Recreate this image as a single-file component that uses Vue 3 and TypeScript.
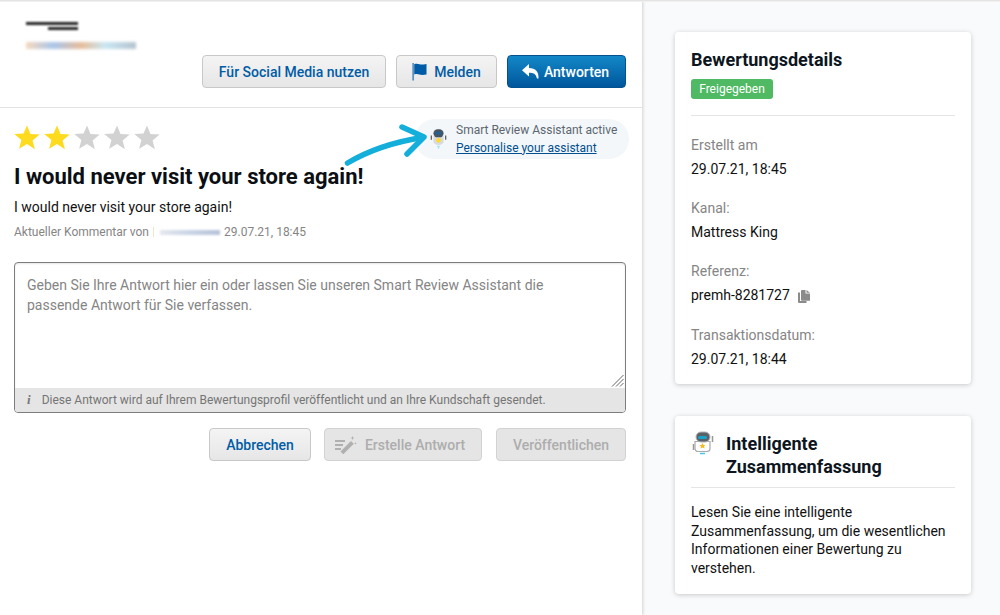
<script setup lang="ts">
const stars = [true, true, false, false, false]
const details = [
  { label: 'Erstellt am', value: '29.07.21, 18:45', copy: false },
  { label: 'Kanal:', value: 'Mattress King', copy: false },
  { label: 'Referenz:', value: 'premh-8281727', copy: true },
  { label: 'Transaktionsdatum:', value: '29.07.21, 18:44', copy: false },
]
</script>

<template>
  <div class="page">
    <main class="left">
      <header class="head">
        <div class="blurs">
          <div class="blur-name"><i class="n1"></i><i class="n2"></i></div>
          <div class="blur-mail"></div>
        </div>
        <div class="actions">
          <button class="btn">Für Social Media nutzen</button>
          <button class="btn">
            <svg class="flag" width="16" height="18" viewBox="0 0 16 18"><path d="M.5 0h1.200V17.500H.5z" fill="#1f6bb0"/><path d="M2.200 1.200c2-.8 3.500-.5 5.200 0s3.400.5 7.100-.2v10.500c-3.500.7-5.400.6-7.100 0s-3.200-.7-5.200 0z" fill="#005ca6"/></svg>
            Melden
          </button>
          <button class="btn primary reply-btn">
            <svg width="17" height="15" viewBox="0 0 17 15"><path d="M7 0 0 6.200l7 6.200V8.700c4.300 0 6.800 1 8 5.800h1.500C17 7.500 13.500 4 7 3.900z" fill="#fff"/></svg>
            Antworten
          </button>
        </div>
      </header>

      <section class="body">
        <div class="top-row">
          <div class="stars">
            <svg v-for="(on, i) in stars" :key="i" width="30" height="26" viewBox="0 0 30 26">
              <path d="M15 1.500l3.500 8.500 9.200.6-7.100 5.800 2.300 8.900L15 20l-7.900 4.800 2.300-8.900-7.100-5.800 9.200-.6z" :fill="on ? '#ffdb1f' : '#d2d2d2'"/>
            </svg>
          </div>
          <div class="assistant">
            <svg class="bot" width="17" height="22" viewBox="0 0 20 26">
              <path d="M1.500 9v5M18.500 9v5" stroke="#555" stroke-width="1.400"/>
              <path d="M4 9h12v7c0 2.500-2.500 4-6 4s-6-1.500-6-4z" fill="#d7dbe0"/>
              <rect x="4" y="1.500" width="12" height="9.500" rx="5" fill="#4a5560"/>
              <rect x="6" y="4.500" width="8" height="3.500" rx="1.700" fill="#25608f"/>
              <circle cx="10" cy="14.500" r="2.800" fill="#ffd92e"/>
              <path d="M8 21h4l-2 4z" fill="#a8e2f2"/>
            </svg>
            <div class="assistant-text">
              <span>Smart Review Assistant active</span>
              <a href="#">Personalise your assistant</a>
            </div>
          </div>
        </div>

        <h1>I would never visit your store again!</h1>
        <p class="comment">I would never visit your store again!</p>
        <p class="meta">
          Aktueller Kommentar von
          <i class="meta-tick"></i>
          <i class="meta-blur"></i>
          29.07.21, 18:45
        </p>

        <div class="reply">
          <div class="input">
            <span>Geben Sie Ihre Antwort hier ein oder lassen Sie unseren Smart Review Assistant die passende Antwort für Sie verfassen.</span>
            <svg class="grip" width="13" height="13" viewBox="0 0 13 13"><path d="M12.500 1 1 12.500M12.500 5 5 12.500M12.500 9 9 12.500" stroke="#666" stroke-width="1"/></svg>
          </div>
          <div class="note">
            <em>i</em>
            <span>Diese Antwort wird auf Ihrem Bewertungsprofil veröffentlicht und an Ihre Kundschaft gesendet.</span>
          </div>
        </div>

        <div class="foot-actions">
          <button class="btn cancel">Abbrechen</button>
          <button class="btn off gen">
            <svg width="22" height="18" viewBox="0 0 22 18"><path d="M0 5h10M0 9h8M0 13h6" stroke="#b0b0b0" stroke-width="2"/><path d="M5.500 15.500 16 5l2.800 2.800L8.300 18.300z" fill="#b0b0b0"/><path d="M17.500 0l.6 1.400 1.400.6-1.400.6-.6 1.400-.6-1.400-1.400-.6 1.400-.6zM20.500 6l.4 1 .9.400-.9.400-.4 1-.4-1-.9-.4.9-.4z" fill="#b0b0b0"/></svg>
            Erstelle Antwort
          </button>
          <button class="btn off pub">Veröffentlichen</button>
        </div>
      </section>

      <svg class="arrow" width="90" height="46" viewBox="0 0 90 46">
        <path d="M3.500 40C22 29 44 20 78 14.500" fill="none" stroke="#14aedb" stroke-width="5.500" stroke-linecap="round"/>
        <path d="M58 4 80 14 63 31" fill="none" stroke="#14aedb" stroke-width="5.500" stroke-linecap="round" stroke-linejoin="round"/>
      </svg>
    </main>

    <aside class="right">
      <section class="card first">
        <h2>Bewertungsdetails</h2>
        <span class="badge">Freigegeben</span>
        <hr />
        <div class="details">
          <div v-for="d in details" :key="d.label" class="detail">
            <div class="label">{{ d.label }}</div>
            <div class="value">
              {{ d.value }}
              <svg v-if="d.copy" class="copy" width="12" height="13" viewBox="0 0 12 13"><path d="M0 2.500h2v8.500h6.500v2H1a1 1 0 0 1-1-1z" fill="#8b8b8b"/><path d="M3 1a1 1 0 0 1 1-1h3.500v3.500H12V10a.8.8 0 0 1-1 .8H4a1 1 0 0 1-1-1z" fill="#8b8b8b"/><path d="M8.500 0 12 2.700H8.500z" fill="#8b8b8b"/></svg>
            </div>
          </div>
        </div>
      </section>

      <section class="card second">
        <div class="card-head">
          <svg class="bot2" width="24" height="24" viewBox="0 0 24 24">
            <path d="M2.500 13v6M21.500 5v6" stroke="#999" stroke-width="1.500"/>
            <path d="M4 10.500h15v7c0 2-1.500 3-3 3H7c-1.500 0-3-1-3-3z" fill="#fff" stroke="#aaa" stroke-width="1.200"/>
            <rect x="5" y="1" width="14" height="10" rx="5" fill="#5b6168" stroke="#b5b5b5"/>
            <rect x="7" y="5" width="9" height="3" rx="1.500" fill="#19a3c9"/>
            <path d="M11.500 12l1 2 2 .2-1.500 1.400.5 2-2-1.100-2 1.100.5-2L8.500 14.200l2-.2z" fill="#f5b921"/>
            <path d="M9 22.500h5" stroke="#45c9ee" stroke-width="1.500"/>
          </svg>
          <h2>Intelligente Zusammenfassung</h2>
        </div>
        <hr class="tight" />
        <p>Lesen Sie eine intelligente Zusammenfassung, um die wesentlichen Informationen einer Bewertung zu verstehen.</p>
      </section>
    </aside>
  </div>
</template>

<style>
html, body { margin: 0; background: #fff; }
</style>

<style scoped>
.page {
  width: 1000px;
  height: 615px;
  display: flex;
  overflow: hidden;
  font-family: Roboto, "Liberation Sans", sans-serif;
  background: #f8fafb;
  box-sizing: border-box;
  position: relative;
}
.page::before {
  content: "";
  position: absolute;
  left: 0; right: 0; top: 0;
  height: 2px;
  background: linear-gradient(#dedede, #f6f6f6);
  z-index: 3;
}
.left {
  width: 642px;
  flex: none;
  background: #fff;
  box-shadow: 1px 0 3px rgba(0, 0, 0, .16);
  position: relative;
  box-sizing: border-box;
}
.head {
  height: 108px;
  box-sizing: border-box;
  border-bottom: 1px solid #e2e2e2;
  position: relative;
  padding: 55px 16px 0 0;
}
.blurs {
  position: absolute;
  left: 26px;
  top: 20px;
}
.blur-name { height: 10px; position: relative; width: 54px; }
.blur-name i { position: absolute; display: block; height: 3px; background: #222; filter: blur(1px); }
.n1 { left: 0; top: 2px; width: 52px; }
.n2 { left: 22px; top: 7px; width: 30px; }
.blur-mail {
  margin-top: 12px;
  width: 110px;
  height: 7px;
  background: linear-gradient(90deg, #f6d9bd, #a9c6ea 25%, #e6bd9a 50%, #c9e7f2 72%, #b5c3cf);
  filter: blur(1.500px);
}
.actions {
  display: flex;
  justify-content: flex-end;
  gap: 10px;
}
.btn {
  height: 33px;
  box-sizing: border-box;
  border: 1px solid #c8c8c8;
  border-radius: 4px;
  background: linear-gradient(#f4f4f4, #e6e6e6);
  color: #005ca6;
  font: 500 14px Roboto, "Liberation Sans", sans-serif;
  display: inline-flex;
  align-items: center;
  justify-content: center;
  gap: 6px;
  padding: 0;
  white-space: nowrap;
}
.actions .btn:nth-child(1) { width: 184px; }
.actions .btn:nth-child(2) { width: 101px; }
.actions .btn:nth-child(3) { width: 119px; }
.btn.primary {
  background: linear-gradient(#1288c8, #00569c);
  border-color: #03528f;
  color: #fff;
}
.reply-btn { gap: 5px; padding-right: 2px; }
.body { padding: 0 16px 0 14px; }
.top-row {
  display: flex;
  justify-content: space-between;
  align-items: flex-start;
  height: 52px;
  padding-top: 11px;
  box-sizing: border-box;
}
.stars {
  display: flex;
  margin-left: -2px;
  margin-top: 5px;
}
.stars svg { display: block; }
.assistant {
  margin-right: -3px;
  height: 40px;
  width: 214px;
  box-sizing: border-box;
  border-radius: 20px;
  background: #f3f7f9;
  display: flex;
  align-items: center;
  padding: 0 0 1px 15px;
  gap: 9px;
}
.bot { flex: none; }
.assistant-text {
  display: flex;
  flex-direction: column;
  font-size: 12px;
  line-height: 18px;
  color: #5c6670;
  white-space: nowrap;
}
.assistant-text a { color: #004f90; text-decoration: underline; }
h1 {
  margin: 4px 0 0;
  font-size: 22px;
  line-height: 26px;
  font-weight: 700;
  color: #0b0f14;
}
.comment {
  margin: 7px 0 0;
  font-size: 14px;
  line-height: 20px;
  color: #111;
}
.meta {
  margin: 6px 0 0;
  font-size: 12px;
  line-height: 18px;
  color: #858585;
  display: flex;
  align-items: center;
  gap: 4px;
}
.meta-tick { width: 1px; height: 10px; background: #f5e3c8; margin-right: 2px; }
.meta-blur {
  width: 60px; height: 5px; margin-top: 1px;
  background: linear-gradient(90deg, #e5e8ee, #c9d4e6 50%, #b8c2d8);
  filter: blur(1px);
}
.reply {
  margin-top: 21px;
  height: 151px;
  border: 1px solid #7d7d7d;
  border-radius: 4px;
  box-sizing: border-box;
  display: flex;
  flex-direction: column;
  overflow: hidden;
  box-shadow: inset 0 1px 2px rgba(0,0,0,.1);
}
.input {
  flex: 1;
  padding: 12px 60px 0 12px;
  font-size: 14px;
  line-height: 20px;
  color: #858585;
  position: relative;
}
.grip { position: absolute; right: 1px; bottom: 1px; }
.note {
  height: 24px;
  flex: none;
  background: #e5e5e5;
  font-size: 12px;
  color: #757575;
  display: flex;
  align-items: center;
  padding-left: 12px;
  gap: 11px;
}
.note em {
  font: italic 700 13px "Liberation Serif", serif;
  color: #777;
}
.foot-actions {
  margin-top: 15px;
  display: flex;
  justify-content: flex-end;
}
.cancel { width: 102px; margin-right: 13px; }
.gen { width: 158px; margin-right: 14px; gap: 8px; padding-right: 6px; }
.pub { width: 130px; }
.off {
  background: #e5e5e5;
  border-color: #d2d2d2;
  color: #adadad;
}
.arrow {
  position: absolute;
  left: 344px;
  top: 123px;
}
.right {
  flex: 1;
  padding: 32px 29px 0 33px;
  box-sizing: border-box;
  display: flex;
  flex-direction: column;
  gap: 32px;
  min-width: 0;
}
.card {
  background: #fff;
  border-radius: 4px;
  box-shadow: 0 1px 5px rgba(0, 0, 0, .2);
  padding: 16px;
  box-sizing: border-box;
  position: relative;
}
.first { height: 352px; }
.second { height: 178px; }
h2 {
  margin: 0;
  font-size: 18px;
  line-height: 23px;
  font-weight: 700;
  color: #0d1620;
}
.badge {
  display: block;
  width: 82px;
  height: 20px;
  margin-top: 8px;
  border-radius: 3px;
  background: #4fb963;
  color: #fff;
  font-size: 12px;
  line-height: 20px;
  text-align: center;
}
hr {
  border: 0;
  height: 1px;
  background: #e3e5e7;
  margin: 16px 0 0;
}
.details { margin-top: 19px; }
.detail + .detail { margin-top: 18px; }
.detail + .detail:last-child { margin-top: 19px; }
.label {
  font-size: 14px;
  line-height: 21px;
  color: #858585;
}
.value {
  font-size: 14px;
  line-height: 21px;
  color: #111;
  margin-top: 3px;
  display: flex;
  align-items: center;
  gap: 8px;
}
.copy { margin-top: 1px; }
.card-head {
  display: flex;
  align-items: flex-start;
  gap: 11px;
}
.bot2 { flex: none; margin-top: -1px; }
.second h2 { flex: 1; }
.tight { margin: 9px 0 0; }
.second p {
  margin: 15px 0 0;
  font-size: 14px;
  line-height: 18.500px;
  color: #111;
}
</style>
